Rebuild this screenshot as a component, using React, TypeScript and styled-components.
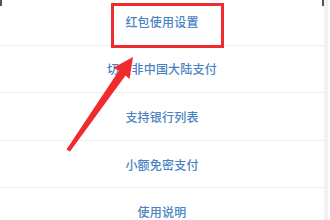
import React from "react";
import styled, { createGlobalStyle } from "styled-components";

const Global = createGlobalStyle`
  html, body { margin: 0; padding: 0; background: #ffffff; }
  body { font-family: "Noto Sans CJK SC", "Noto Sans", sans-serif; }
`;

const Screen = styled.div`
  position: relative;
  width: 330px;
  height: 220px;
  overflow: hidden;
  background: #ffffff;
  display: flex;
`;

const Sheet = styled.div`
  width: 324px;
  display: flex;
  flex-direction: column;
  margin-top: -2px;
`;

const Gutter = styled.div`
  width: 4px;
  background: #f1f1f3;
`;

const Row = styled.div`
  height: 46.6px;
  flex: 0 0 46.6px;
  display: flex;
  align-items: center;
  justify-content: center;
  border-bottom: 1px solid #efeff1;
  color: #4a83c3;
  font-size: 12px;
  font-weight: 500;
  letter-spacing: 0.2px;
`;

const Highlight = styled.div`
  position: absolute;
  left: 111px;
  top: 3px;
  width: 107px;
  height: 39px;
  border: 3px solid #ef2b2d;
`;

const Corner = styled.div<{ $side: "left" | "right" }>`
  position: absolute;
  top: 0;
  ${(p) => (p.$side === "left" ? "left: 0;" : "left: 322px;")}
  width: 2px;
  height: 6px;
  background: #555;
`;

const Overlay = styled.svg`
  position: absolute;
  left: 0;
  top: 0;
  pointer-events: none;
`;

const items = [
  "红包使用设置",
  "切换非中国大陆支付",
  "支持银行列表",
  "小额免密支付",
  "使用说明",
];

export default function App() {
  return (
    <>
      <Global />
      <Screen>
        <Sheet>
          {items.map((t) => (
            <Row key={t}>{t}</Row>
          ))}
        </Sheet>
        <Gutter />
        <Corner $side="left" />
        <Corner $side="right" />
        <Highlight />
        <Overlay width="330" height="220" viewBox="0 0 330 220">
          <polygon
            points="133,57 129.5,79 125.5,75.5 70,151.5 66.5,149.5 119,70.5 113,68"
            fill="#ef2b2d"
          />
        </Overlay>
      </Screen>
    </>
  );
}
